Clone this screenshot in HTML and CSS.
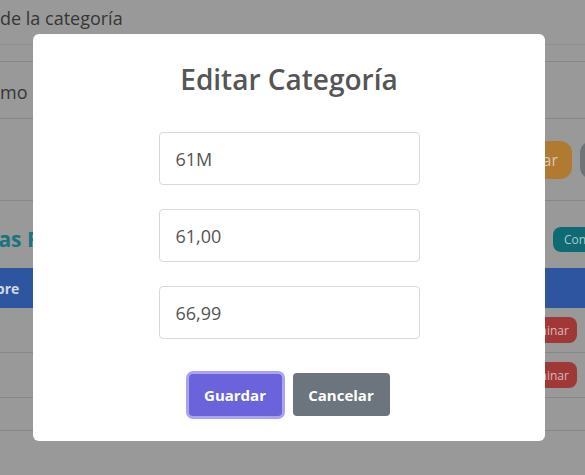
FILE: index.html
```html
<!DOCTYPE html>
<html lang="es">
<head>
<meta charset="utf-8">
<title>Editar Categoría</title>
<link rel="stylesheet" href="styles.css">
</head>
<body>
<div class="page">
  <div class="row r1"><span class="cell">de la categoría</span></div>
  <div class="row r2"></div>
  <div class="row r3"><span class="cell">mo</span></div>
  <div class="row r4">
    <span class="pill orange">Editar</span>
    <span class="pill gray">Borrar</span>
  </div>
  <div class="section">
    <span class="heading">Categorías Registradas</span>
    <span class="pill teal">Consultar</span>
  </div>
  <div class="thead"><span class="th">Nombre</span></div>
  <div class="row r5"><span class="pill red">Eliminar</span></div>
  <div class="row r6"><span class="pill red">Eliminar</span></div>
  <div class="row r7"></div>
</div>

<div class="modal">
  <h2 class="title">Editar Categoría</h2>
  <div class="fields">
    <input class="field" type="text" value="61M">
    <input class="field" type="text" value="61,00">
    <input class="field" type="text" value="66,99">
  </div>
  <div class="actions">
    <button class="btn save">Guardar</button>
    <button class="btn cancel">Cancelar</button>
  </div>
</div>
</body>
</html>
```
FILE: styles.css
```css
* { box-sizing: border-box; }
html, body { margin: 0; padding: 0; }
body {
  width: 585px;
  height: 475px;
  overflow: hidden;
  background: #999999;
  font-family: "Open Sans", "Noto Sans", sans-serif;
  position: relative;
}
.page { display: flex; flex-direction: column; }
.row {
  display: flex;
  align-items: center;
  border-bottom: 1px solid #878787;
  color: #363636;
  font-size: 18px;
}
.r1 { height: 45px; border-bottom-color: #8e8e8e; }
.r1 .cell { margin-top: -8px; }
.r2 { height: 17px; }
.r3 { height: 57px; }
.r3 .cell { margin-top: 3px; }
.r4 { height: 82px; justify-content: flex-end; gap: 8px; margin-right: -67px; }
.section {
  height: 67px;
  display: flex;
  align-items: center;
  justify-content: space-between;
  padding-top: 9px;
  margin-left: -90px;
  margin-right: -44px;
}
.heading { color: #1a737e; font-weight: 700; font-size: 21px; }
.thead {
  height: 40px;
  background: #2e56a0;
  display: flex;
  align-items: center;
  margin-left: -38px;
}
.th { color: #d4d8e2; font-weight: 700; font-size: 14px; }
.r5 { height: 45px; justify-content: flex-end; padding-right: 8px; }
.r6 { height: 45px; justify-content: flex-end; padding-right: 8px; }
.r7 { height: 33px; }
.pill {
  display: inline-flex;
  align-items: center;
  justify-content: center;
  color: #d9d0c4;
  font-size: 13px;
  border-radius: 12px;
}
.orange { background: #b07a30; height: 38px; width: 72px; font-size: 16px; color: #d8c7b0; border-radius: 12px; }
.gray { background: #6e7377; height: 38px; width: 72px; font-size: 16px; }
.teal { background: #106a74; height: 25px; width: 76px; font-size: 12px; color: #a9c9cc; border-radius: 8px; }
.red { background: #a03838; height: 26px; width: 62px; font-size: 12px; color: #d8b8b8; border-radius: 8px; }

.modal {
  position: absolute;
  left: 33px;
  top: 34px;
  width: 512px;
  height: 407px;
  background: #ffffff;
  border-radius: 6px;
  display: flex;
  flex-direction: column;
  align-items: center;
}
.title {
  margin: 25px 0 0;
  font-size: 28px;
  font-weight: 600;
  color: #555555;
  line-height: 40px;
}
.fields {
  margin-top: 33px;
  display: flex;
  flex-direction: column;
  gap: 24px;
}
.field {
  width: 261px;
  height: 53px;
  border: 1px solid #d9d9d9;
  border-radius: 4px;
  padding: 0 16px;
  font-family: "Open Sans", "Noto Sans", sans-serif;
  font-size: 18px;
  color: #555555;
  background: #fff;
  outline: none;
}
.actions {
  margin-top: 34px;
  display: flex;
  gap: 11px;
  align-items: center;
}
.btn {
  border: none;
  border-radius: 4px;
  color: #ffffff;
  font-family: "Open Sans", "Noto Sans", sans-serif;
  font-weight: 700;
  font-size: 15px;
  height: 43px;
  padding: 0;
}
.save {
  width: 93px;
  background: #6b63dc;
  box-shadow: 0 0 0 3px #aaa4ef;
  height: 42px;
}
.cancel {
  width: 97px;
  background: #6c757d;
}
```
